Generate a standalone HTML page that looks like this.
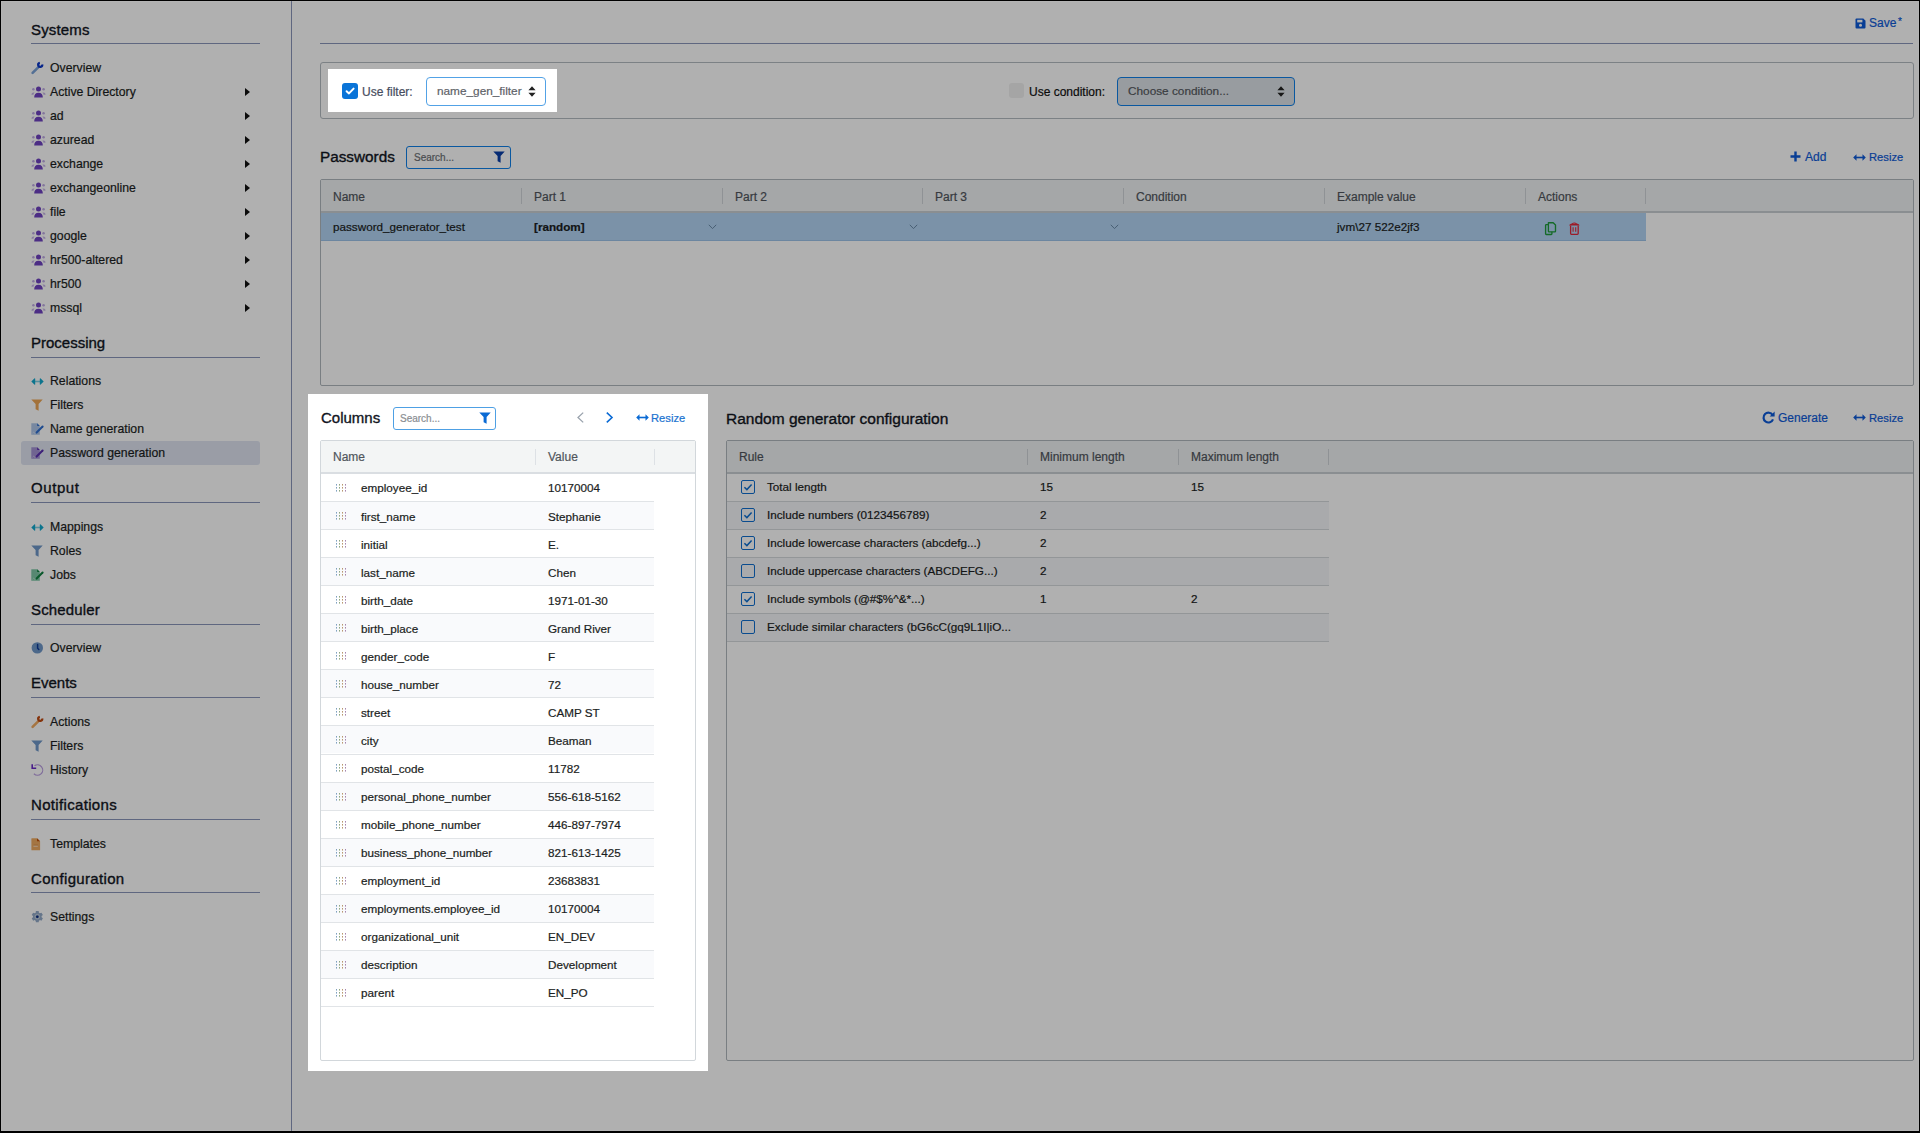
<!DOCTYPE html>
<html><head><meta charset="utf-8"><style>
html,body{margin:0;padding:0;width:1920px;height:1133px;overflow:hidden;background:#fff}
body{position:relative;font-family:"Liberation Sans",sans-serif;color:#1b1e22}
.t{-webkit-text-stroke:0.2px currentColor}
.a{position:absolute}
.t{position:absolute;white-space:nowrap;line-height:1}
.h{color:#111522;-webkit-text-stroke:0.35px #111522}
svg{overflow:visible}
</style></head><body>
<div class="a" style="left:0;top:0;width:1920px;height:1133px;background:#fff"></div>
<div class="a" style="left:291px;top:0px;width:1px;height:1133px;background:#8a95ba"></div>
<div class="t h" style="left:31px;top:22px;font-size:15px;letter-spacing:0.15px">Systems</div>
<div class="a" style="left:31px;top:43px;width:229px;height:1px;background:#8a95ba"></div>
<div class="t h" style="left:31px;top:335px;font-size:15px;letter-spacing:0px">Processing</div>
<div class="a" style="left:31px;top:357px;width:229px;height:1px;background:#8a95ba"></div>
<div class="t h" style="left:31px;top:480px;font-size:15px;letter-spacing:0.58px">Output</div>
<div class="a" style="left:31px;top:502px;width:229px;height:1px;background:#8a95ba"></div>
<div class="t h" style="left:31px;top:602px;font-size:15px;letter-spacing:0.14px">Scheduler</div>
<div class="a" style="left:31px;top:624px;width:229px;height:1px;background:#8a95ba"></div>
<div class="t h" style="left:31px;top:675px;font-size:15px;letter-spacing:0px">Events</div>
<div class="a" style="left:31px;top:697px;width:229px;height:1px;background:#8a95ba"></div>
<div class="t h" style="left:31px;top:797px;font-size:15px;letter-spacing:0.33px">Notifications</div>
<div class="a" style="left:31px;top:819px;width:229px;height:1px;background:#8a95ba"></div>
<div class="t h" style="left:31px;top:871px;font-size:15px;letter-spacing:0.33px">Configuration</div>
<div class="a" style="left:31px;top:892px;width:229px;height:1px;background:#8a95ba"></div>
<div class="a" style="left:21px;top:441px;width:239px;height:24px;background:#dfe4f1;border-radius:3px"></div>
<div class="t " style="left:50px;top:62px;font-size:12.25px;">Overview</div>
<svg class="a" style="left:31px;top:60px" width="14" height="14" viewBox="0 0 14 14"><path d="M1.6 12.9 L7.2 7.3" stroke="#7aa2d8" stroke-width="2.6" stroke-linecap="round"/><path d="M11.17 4.55 A2.0 2.0 0 1 1 8.85 2.93" stroke="#0a36c8" stroke-width="2.3" fill="none"/></svg>
<div class="t " style="left:50px;top:86px;font-size:12.25px;">Active Directory</div>
<svg class="a" style="left:31px;top:86px" width="15" height="12" viewBox="0 0 15 12"><circle cx="7.5" cy="3" r="2.5" fill="#6f42c1"/><path d="M3.2 11.5 Q3.2 6.8 7.5 6.8 Q11.8 6.8 11.8 11.5 Z" fill="#6f42c1"/><circle cx="2.4" cy="3.3" r="1.2" fill="#6f42c1" fill-opacity="0.45"/><circle cx="12.6" cy="3.3" r="1.2" fill="#6f42c1" fill-opacity="0.45"/><path d="M0.4 8.8 Q0.4 6.4 2.6 6.4 L3.6 6.6 Q2.6 7.6 2.5 8.8 Z" fill="#6f42c1" fill-opacity="0.4"/><path d="M14.6 8.8 Q14.6 6.4 12.4 6.4 L11.4 6.6 Q12.4 7.6 12.5 8.8 Z" fill="#6f42c1" fill-opacity="0.4"/></svg>
<svg class="a" style="left:245px;top:88px" width="5" height="8" viewBox="0 0 5 8"><path d="M0 0 L5 4 L0 8 Z" fill="#111"/></svg>
<div class="t " style="left:50px;top:110px;font-size:12.25px;">ad</div>
<svg class="a" style="left:31px;top:110px" width="15" height="12" viewBox="0 0 15 12"><circle cx="7.5" cy="3" r="2.5" fill="#6f42c1"/><path d="M3.2 11.5 Q3.2 6.8 7.5 6.8 Q11.8 6.8 11.8 11.5 Z" fill="#6f42c1"/><circle cx="2.4" cy="3.3" r="1.2" fill="#6f42c1" fill-opacity="0.45"/><circle cx="12.6" cy="3.3" r="1.2" fill="#6f42c1" fill-opacity="0.45"/><path d="M0.4 8.8 Q0.4 6.4 2.6 6.4 L3.6 6.6 Q2.6 7.6 2.5 8.8 Z" fill="#6f42c1" fill-opacity="0.4"/><path d="M14.6 8.8 Q14.6 6.4 12.4 6.4 L11.4 6.6 Q12.4 7.6 12.5 8.8 Z" fill="#6f42c1" fill-opacity="0.4"/></svg>
<svg class="a" style="left:245px;top:112px" width="5" height="8" viewBox="0 0 5 8"><path d="M0 0 L5 4 L0 8 Z" fill="#111"/></svg>
<div class="t " style="left:50px;top:134px;font-size:12.25px;">azuread</div>
<svg class="a" style="left:31px;top:134px" width="15" height="12" viewBox="0 0 15 12"><circle cx="7.5" cy="3" r="2.5" fill="#6f42c1"/><path d="M3.2 11.5 Q3.2 6.8 7.5 6.8 Q11.8 6.8 11.8 11.5 Z" fill="#6f42c1"/><circle cx="2.4" cy="3.3" r="1.2" fill="#6f42c1" fill-opacity="0.45"/><circle cx="12.6" cy="3.3" r="1.2" fill="#6f42c1" fill-opacity="0.45"/><path d="M0.4 8.8 Q0.4 6.4 2.6 6.4 L3.6 6.6 Q2.6 7.6 2.5 8.8 Z" fill="#6f42c1" fill-opacity="0.4"/><path d="M14.6 8.8 Q14.6 6.4 12.4 6.4 L11.4 6.6 Q12.4 7.6 12.5 8.8 Z" fill="#6f42c1" fill-opacity="0.4"/></svg>
<svg class="a" style="left:245px;top:136px" width="5" height="8" viewBox="0 0 5 8"><path d="M0 0 L5 4 L0 8 Z" fill="#111"/></svg>
<div class="t " style="left:50px;top:158px;font-size:12.25px;">exchange</div>
<svg class="a" style="left:31px;top:158px" width="15" height="12" viewBox="0 0 15 12"><circle cx="7.5" cy="3" r="2.5" fill="#6f42c1"/><path d="M3.2 11.5 Q3.2 6.8 7.5 6.8 Q11.8 6.8 11.8 11.5 Z" fill="#6f42c1"/><circle cx="2.4" cy="3.3" r="1.2" fill="#6f42c1" fill-opacity="0.45"/><circle cx="12.6" cy="3.3" r="1.2" fill="#6f42c1" fill-opacity="0.45"/><path d="M0.4 8.8 Q0.4 6.4 2.6 6.4 L3.6 6.6 Q2.6 7.6 2.5 8.8 Z" fill="#6f42c1" fill-opacity="0.4"/><path d="M14.6 8.8 Q14.6 6.4 12.4 6.4 L11.4 6.6 Q12.4 7.6 12.5 8.8 Z" fill="#6f42c1" fill-opacity="0.4"/></svg>
<svg class="a" style="left:245px;top:160px" width="5" height="8" viewBox="0 0 5 8"><path d="M0 0 L5 4 L0 8 Z" fill="#111"/></svg>
<div class="t " style="left:50px;top:182px;font-size:12.25px;">exchangeonline</div>
<svg class="a" style="left:31px;top:182px" width="15" height="12" viewBox="0 0 15 12"><circle cx="7.5" cy="3" r="2.5" fill="#6f42c1"/><path d="M3.2 11.5 Q3.2 6.8 7.5 6.8 Q11.8 6.8 11.8 11.5 Z" fill="#6f42c1"/><circle cx="2.4" cy="3.3" r="1.2" fill="#6f42c1" fill-opacity="0.45"/><circle cx="12.6" cy="3.3" r="1.2" fill="#6f42c1" fill-opacity="0.45"/><path d="M0.4 8.8 Q0.4 6.4 2.6 6.4 L3.6 6.6 Q2.6 7.6 2.5 8.8 Z" fill="#6f42c1" fill-opacity="0.4"/><path d="M14.6 8.8 Q14.6 6.4 12.4 6.4 L11.4 6.6 Q12.4 7.6 12.5 8.8 Z" fill="#6f42c1" fill-opacity="0.4"/></svg>
<svg class="a" style="left:245px;top:184px" width="5" height="8" viewBox="0 0 5 8"><path d="M0 0 L5 4 L0 8 Z" fill="#111"/></svg>
<div class="t " style="left:50px;top:206px;font-size:12.25px;">file</div>
<svg class="a" style="left:31px;top:206px" width="15" height="12" viewBox="0 0 15 12"><circle cx="7.5" cy="3" r="2.5" fill="#6f42c1"/><path d="M3.2 11.5 Q3.2 6.8 7.5 6.8 Q11.8 6.8 11.8 11.5 Z" fill="#6f42c1"/><circle cx="2.4" cy="3.3" r="1.2" fill="#6f42c1" fill-opacity="0.45"/><circle cx="12.6" cy="3.3" r="1.2" fill="#6f42c1" fill-opacity="0.45"/><path d="M0.4 8.8 Q0.4 6.4 2.6 6.4 L3.6 6.6 Q2.6 7.6 2.5 8.8 Z" fill="#6f42c1" fill-opacity="0.4"/><path d="M14.6 8.8 Q14.6 6.4 12.4 6.4 L11.4 6.6 Q12.4 7.6 12.5 8.8 Z" fill="#6f42c1" fill-opacity="0.4"/></svg>
<svg class="a" style="left:245px;top:208px" width="5" height="8" viewBox="0 0 5 8"><path d="M0 0 L5 4 L0 8 Z" fill="#111"/></svg>
<div class="t " style="left:50px;top:230px;font-size:12.25px;">google</div>
<svg class="a" style="left:31px;top:230px" width="15" height="12" viewBox="0 0 15 12"><circle cx="7.5" cy="3" r="2.5" fill="#6f42c1"/><path d="M3.2 11.5 Q3.2 6.8 7.5 6.8 Q11.8 6.8 11.8 11.5 Z" fill="#6f42c1"/><circle cx="2.4" cy="3.3" r="1.2" fill="#6f42c1" fill-opacity="0.45"/><circle cx="12.6" cy="3.3" r="1.2" fill="#6f42c1" fill-opacity="0.45"/><path d="M0.4 8.8 Q0.4 6.4 2.6 6.4 L3.6 6.6 Q2.6 7.6 2.5 8.8 Z" fill="#6f42c1" fill-opacity="0.4"/><path d="M14.6 8.8 Q14.6 6.4 12.4 6.4 L11.4 6.6 Q12.4 7.6 12.5 8.8 Z" fill="#6f42c1" fill-opacity="0.4"/></svg>
<svg class="a" style="left:245px;top:232px" width="5" height="8" viewBox="0 0 5 8"><path d="M0 0 L5 4 L0 8 Z" fill="#111"/></svg>
<div class="t " style="left:50px;top:254px;font-size:12.25px;">hr500-altered</div>
<svg class="a" style="left:31px;top:254px" width="15" height="12" viewBox="0 0 15 12"><circle cx="7.5" cy="3" r="2.5" fill="#6f42c1"/><path d="M3.2 11.5 Q3.2 6.8 7.5 6.8 Q11.8 6.8 11.8 11.5 Z" fill="#6f42c1"/><circle cx="2.4" cy="3.3" r="1.2" fill="#6f42c1" fill-opacity="0.45"/><circle cx="12.6" cy="3.3" r="1.2" fill="#6f42c1" fill-opacity="0.45"/><path d="M0.4 8.8 Q0.4 6.4 2.6 6.4 L3.6 6.6 Q2.6 7.6 2.5 8.8 Z" fill="#6f42c1" fill-opacity="0.4"/><path d="M14.6 8.8 Q14.6 6.4 12.4 6.4 L11.4 6.6 Q12.4 7.6 12.5 8.8 Z" fill="#6f42c1" fill-opacity="0.4"/></svg>
<svg class="a" style="left:245px;top:256px" width="5" height="8" viewBox="0 0 5 8"><path d="M0 0 L5 4 L0 8 Z" fill="#111"/></svg>
<div class="t " style="left:50px;top:278px;font-size:12.25px;">hr500</div>
<svg class="a" style="left:31px;top:278px" width="15" height="12" viewBox="0 0 15 12"><circle cx="7.5" cy="3" r="2.5" fill="#6f42c1"/><path d="M3.2 11.5 Q3.2 6.8 7.5 6.8 Q11.8 6.8 11.8 11.5 Z" fill="#6f42c1"/><circle cx="2.4" cy="3.3" r="1.2" fill="#6f42c1" fill-opacity="0.45"/><circle cx="12.6" cy="3.3" r="1.2" fill="#6f42c1" fill-opacity="0.45"/><path d="M0.4 8.8 Q0.4 6.4 2.6 6.4 L3.6 6.6 Q2.6 7.6 2.5 8.8 Z" fill="#6f42c1" fill-opacity="0.4"/><path d="M14.6 8.8 Q14.6 6.4 12.4 6.4 L11.4 6.6 Q12.4 7.6 12.5 8.8 Z" fill="#6f42c1" fill-opacity="0.4"/></svg>
<svg class="a" style="left:245px;top:280px" width="5" height="8" viewBox="0 0 5 8"><path d="M0 0 L5 4 L0 8 Z" fill="#111"/></svg>
<div class="t " style="left:50px;top:302px;font-size:12.25px;">mssql</div>
<svg class="a" style="left:31px;top:302px" width="15" height="12" viewBox="0 0 15 12"><circle cx="7.5" cy="3" r="2.5" fill="#6f42c1"/><path d="M3.2 11.5 Q3.2 6.8 7.5 6.8 Q11.8 6.8 11.8 11.5 Z" fill="#6f42c1"/><circle cx="2.4" cy="3.3" r="1.2" fill="#6f42c1" fill-opacity="0.45"/><circle cx="12.6" cy="3.3" r="1.2" fill="#6f42c1" fill-opacity="0.45"/><path d="M0.4 8.8 Q0.4 6.4 2.6 6.4 L3.6 6.6 Q2.6 7.6 2.5 8.8 Z" fill="#6f42c1" fill-opacity="0.4"/><path d="M14.6 8.8 Q14.6 6.4 12.4 6.4 L11.4 6.6 Q12.4 7.6 12.5 8.8 Z" fill="#6f42c1" fill-opacity="0.4"/></svg>
<svg class="a" style="left:245px;top:304px" width="5" height="8" viewBox="0 0 5 8"><path d="M0 0 L5 4 L0 8 Z" fill="#111"/></svg>
<div class="t " style="left:50px;top:375px;font-size:12.25px;">Relations</div>
<svg class="a" style="left:31px;top:378px" width="13" height="7" viewBox="0 0 13 7"><path d="M0.3 3.5 L3.6 0.2 Q4.2 0 4.2 0.8 V6.2 Q4.2 7 3.6 6.8 Z M12.7 3.5 L9.4 0.2 Q8.8 0 8.8 0.8 V6.2 Q8.8 7 9.4 6.8 Z" fill="#12a8cc"/><rect x="4" y="2.7" width="5" height="1.6" fill="#12a8cc" fill-opacity="0.55"/></svg>
<div class="t " style="left:50px;top:399px;font-size:12.25px;">Filters</div>
<svg class="a" style="left:31px;top:399px" width="12" height="12" viewBox="0 0 12 12"><path d="M0.3 0.4 H11.7 L7.6 5.0 V11.8 L4.6 10.2 V5.0 Z" fill="#eda655" fill-opacity="1.0"/></svg>
<div class="t " style="left:50px;top:423px;font-size:12.25px;">Name generation</div>
<svg class="a" style="left:31px;top:423px" width="13" height="12" viewBox="0 0 13 12"><path d="M0.3 0.3 H6.2 L8.8 2.9 V11.7 H0.3 Z" fill="#7aa0d8" fill-opacity="0.6"/><path d="M6.2 0.3 L8.8 2.9 H6.2 Z" fill="#2f6fd0"/><path d="M1.6 10.2 Q2.6 8.4 3.4 10 Q4 9.2 4.6 10" stroke="#fff" stroke-opacity="0.6" stroke-width="0.8" fill="none"/><path d="M5.6 9.6 L11.6 3.6" stroke="#2f6fd0" stroke-width="2.1" stroke-linecap="round"/></svg>
<div class="t " style="left:50px;top:447px;font-size:12.25px;">Password generation</div>
<svg class="a" style="left:31px;top:447px" width="13" height="12" viewBox="0 0 13 12"><path d="M0.3 0.3 H6.2 L8.8 2.9 V11.7 H0.3 Z" fill="#7a5cc0" fill-opacity="0.6"/><path d="M6.2 0.3 L8.8 2.9 H6.2 Z" fill="#5a2fb0"/><path d="M1.6 10.2 Q2.6 8.4 3.4 10 Q4 9.2 4.6 10" stroke="#fff" stroke-opacity="0.6" stroke-width="0.8" fill="none"/><path d="M5.6 9.6 L11.6 3.6" stroke="#5a2fb0" stroke-width="2.1" stroke-linecap="round"/></svg>
<div class="t " style="left:50px;top:521px;font-size:12.25px;">Mappings</div>
<svg class="a" style="left:31px;top:524px" width="13" height="7" viewBox="0 0 13 7"><path d="M0.3 3.5 L3.6 0.2 Q4.2 0 4.2 0.8 V6.2 Q4.2 7 3.6 6.8 Z M12.7 3.5 L9.4 0.2 Q8.8 0 8.8 0.8 V6.2 Q8.8 7 9.4 6.8 Z" fill="#12a8cc"/><rect x="4" y="2.7" width="5" height="1.6" fill="#12a8cc" fill-opacity="0.55"/></svg>
<div class="t " style="left:50px;top:545px;font-size:12.25px;">Roles</div>
<svg class="a" style="left:31px;top:545px" width="12" height="12" viewBox="0 0 12 12"><path d="M0.3 0.4 H11.7 L7.6 5.0 V11.8 L4.6 10.2 V5.0 Z" fill="#6f97c8" fill-opacity="1.0"/></svg>
<div class="t " style="left:50px;top:569px;font-size:12.25px;">Jobs</div>
<svg class="a" style="left:31px;top:569px" width="13" height="12" viewBox="0 0 13 12"><path d="M0.3 0.3 H6.2 L8.8 2.9 V11.7 H0.3 Z" fill="#28a06a" fill-opacity="0.6"/><path d="M6.2 0.3 L8.8 2.9 H6.2 Z" fill="#108040"/><path d="M1.6 10.2 Q2.6 8.4 3.4 10 Q4 9.2 4.6 10" stroke="#fff" stroke-opacity="0.6" stroke-width="0.8" fill="none"/><path d="M5.6 9.6 L11.6 3.6" stroke="#108040" stroke-width="2.1" stroke-linecap="round"/></svg>
<div class="t " style="left:50px;top:642px;font-size:12.25px;">Overview</div>
<svg class="a" style="left:31px;top:641px" width="13" height="13" viewBox="0 0 13 13"><circle cx="6.3" cy="6.9" r="5.7" fill="#6f97c8"/><path d="M6.6 3.6 V7.3 L7.8 8.5" stroke="#0c3a98" stroke-width="1.5" fill="none" stroke-linecap="round"/></svg>
<div class="t " style="left:50px;top:716px;font-size:12.25px;">Actions</div>
<svg class="a" style="left:31px;top:714px" width="14" height="14" viewBox="0 0 14 14"><path d="M1.6 12.9 L7.2 7.3" stroke="#f0aa60" stroke-width="2.6" stroke-linecap="round"/><path d="M11.17 4.55 A2.0 2.0 0 1 1 8.85 2.93" stroke="#c04a10" stroke-width="2.3" fill="none"/></svg>
<div class="t " style="left:50px;top:740px;font-size:12.25px;">Filters</div>
<svg class="a" style="left:31px;top:740px" width="12" height="12" viewBox="0 0 12 12"><path d="M0.3 0.4 H11.7 L7.6 5.0 V11.8 L4.6 10.2 V5.0 Z" fill="#6f97c8" fill-opacity="1.0"/></svg>
<div class="t " style="left:50px;top:764px;font-size:12.25px;">History</div>
<svg class="a" style="left:31px;top:763px" width="13" height="13" viewBox="0 0 13 13"><path d="M3.52 2.74 A5.2 5.2 0 1 1 2.89 10.74" stroke="#b89ce0" stroke-width="1.2" fill="none"/><path d="M1.2 1.2 V5.3 H5.2" stroke="#6a2ac8" stroke-width="1.6" fill="none"/></svg>
<div class="t " style="left:50px;top:838px;font-size:12.25px;">Templates</div>
<svg class="a" style="left:31px;top:838px" width="10" height="13" viewBox="0 0 10 13"><path d="M0.4 0.8 Q0.4 0.3 0.9 0.3 H6 L9.1 3.3 V11.8 Q9.1 12.3 8.6 12.3 H0.9 Q0.4 12.3 0.4 11.8 Z" fill="#eeaa60"/><path d="M6 0.3 L9.1 3.3 H6.2 Q6 3.3 6 3.1 Z" fill="#c0500a"/><rect x="2.6" y="6.6" width="4.4" height="0.9" fill="#d8904a"/><rect x="2.4" y="7.6" width="4.4" height="1.4" fill="#fff" fill-opacity="0.45"/></svg>
<div class="t " style="left:50px;top:911px;font-size:12.25px;">Settings</div>
<svg class="a" style="left:31px;top:910px" width="13" height="13" viewBox="0 0 13 13"><g transform="translate(0.3,0.7)"><path d="M4.39 2.01 L4.60 0.37 L7.40 0.37 L7.61 2.01 L8.15 2.28 L8.65 2.61 L10.17 1.97 L11.58 4.40 L10.26 5.40 L10.30 6.00 L10.26 6.60 L11.58 7.60 L10.17 10.03 L8.65 9.39 L8.15 9.72 L7.61 9.99 L7.40 11.63 L4.60 11.63 L4.39 9.99 L3.85 9.72 L3.35 9.39 L1.83 10.03 L0.42 7.60 L1.74 6.60 L1.70 6.00 L1.74 5.40 L0.42 4.40 L1.83 1.97 L3.35 2.61 L3.85 2.28 Z" fill="#93aac8"/><circle cx="6" cy="6" r="2.3" fill="none" stroke="#c8d2de" stroke-width="0.9"/><circle cx="6" cy="6" r="1.3" fill="#0a2c80"/></g></svg>
<div class="a" style="left:320px;top:43px;width:1593px;height:1px;background:#8a95ba"></div>
<svg class="a" style="left:1855px;top:18px" width="11" height="11" viewBox="0 0 11 11"><path d="M0.5 1.5 Q0.5 0.5 1.5 0.5 H8.3 L10.5 2.7 V9.5 Q10.5 10.5 9.5 10.5 H1.5 Q0.5 10.5 0.5 9.5 Z" fill="#0e5ad8"/><rect x="2.2" y="1.8" width="5.2" height="2.6" fill="#fff"/><circle cx="5.5" cy="7.3" r="1.5" fill="#fff"/></svg>
<div class="t " style="left:1869px;top:17px;font-size:12px;color:#0e5ad8">Save</div>
<div class="t " style="left:1898px;top:17px;font-size:10px;color:#0e5ad8">*</div>
<div class="a" style="left:320px;top:62px;width:1594px;height:57px;border:1px solid #b4bbc1;border-radius:3px;box-sizing:border-box"></div>
<div class="a" style="left:342px;top:83px;width:16px;height:16px;background:#0a74d8;border-radius:3px"></div>
<svg class="a" style="left:342px;top:83px" width="16" height="16" viewBox="0 0 16 16"><path d="M4.6 8.2 L7 10.4 L11.6 5.6" stroke="#fff" stroke-width="2" fill="none" stroke-linecap="round" stroke-linejoin="round"/></svg>
<div class="t " style="left:362px;top:86px;font-size:12px;color:#474d60">Use filter:</div>
<div class="a" style="left:426px;top:77px;width:120px;height:29px;border:1px solid #52a2e6;border-radius:4px;box-sizing:border-box"></div>
<div class="t " style="left:437px;top:86px;font-size:11.8px;color:#5e6268">name_gen_filter</div>
<svg class="a" style="left:528px;top:86px" width="8" height="11" viewBox="0 0 8 11"><path d="M4 0.3 L7.6 4.3 H0.4 Z M4 10.7 L7.6 6.7 H0.4 Z" fill="#222"/></svg>
<div class="a" style="left:1009px;top:83px;width:15px;height:15px;background:#f0f0f0;border-radius:3px"></div>
<div class="t " style="left:1029px;top:86px;font-size:12px;color:#111">Use condition:</div>
<div class="a" style="left:1117px;top:77px;width:178px;height:29px;border:1.5px solid #0f80e8;border-radius:4px;box-sizing:border-box;background:#dde3e8"></div>
<div class="t " style="left:1128px;top:86px;font-size:11.8px;color:#55595e">Choose condition...</div>
<svg class="a" style="left:1277px;top:86px" width="8" height="11" viewBox="0 0 8 11"><path d="M4 0.3 L7.6 4.3 H0.4 Z M4 10.7 L7.6 6.7 H0.4 Z" fill="#222"/></svg>
<div class="t h" style="left:320px;top:149px;font-size:15.3px;">Passwords</div>
<div class="a" style="left:406px;top:146px;width:105px;height:23px;border:1.5px solid #0f80e8;border-radius:3px;box-sizing:border-box"></div>
<div class="t " style="left:414px;top:153px;font-size:10px;color:#6c7075">Search...</div>
<svg class="a" style="left:493px;top:151px" width="12" height="12" viewBox="0 0 12 12"><path d="M0.3 0.4 H11.7 L7.6 5.0 V11.8 L4.6 10.2 V5.0 Z" fill="#0a3fa8" fill-opacity="1.0"/></svg>
<svg class="a" style="left:1790px;top:151px" width="11" height="11" viewBox="0 0 11 11"><path d="M5.5 0.5 V10.5 M0.5 5.5 H10.5" stroke="#0e5ad8" stroke-width="2.4"/></svg>
<div class="t " style="left:1805px;top:151px;font-size:12px;color:#0e5ad8">Add</div>
<svg class="a" style="left:1853px;top:154px" width="13" height="7" viewBox="0 0 13 7"><path d="M0.2 3.5 L3.5 0.3 V6.7 Z M12.8 3.5 L9.5 0.3 V6.7 Z" fill="#0e5ad8"/><rect x="3" y="2.7" width="7" height="1.6" fill="#0e5ad8"/></svg>
<div class="t " style="left:1869px;top:152px;font-size:11.2px;color:#0e5ad8">Resize</div>
<div class="a" style="left:320px;top:179px;width:1594px;height:207px;border:1px solid #b0b7bd;box-sizing:border-box;border-radius:2px"></div>
<div class="a" style="left:321px;top:180px;width:1592px;height:31px;background:#eff2f3"></div>
<div class="a" style="left:321px;top:211px;width:1592px;height:2px;background:#c9ced3"></div>
<div class="t " style="left:333px;top:191px;font-size:12px;color:#50555c">Name</div>
<div class="t " style="left:534px;top:191px;font-size:12px;color:#50555c">Part 1</div>
<div class="t " style="left:735px;top:191px;font-size:12px;color:#50555c">Part 2</div>
<div class="t " style="left:935px;top:191px;font-size:12px;color:#50555c">Part 3</div>
<div class="t " style="left:1136px;top:191px;font-size:12px;color:#50555c">Condition</div>
<div class="t " style="left:1337px;top:191px;font-size:12px;color:#50555c">Example value</div>
<div class="t " style="left:1538px;top:191px;font-size:12px;color:#50555c">Actions</div>
<div class="a" style="left:521px;top:188px;width:1px;height:16px;background:#cfd4d8"></div>
<div class="a" style="left:722px;top:188px;width:1px;height:16px;background:#cfd4d8"></div>
<div class="a" style="left:922px;top:188px;width:1px;height:16px;background:#cfd4d8"></div>
<div class="a" style="left:1123px;top:188px;width:1px;height:16px;background:#cfd4d8"></div>
<div class="a" style="left:1324px;top:188px;width:1px;height:16px;background:#cfd4d8"></div>
<div class="a" style="left:1525px;top:188px;width:1px;height:16px;background:#cfd4d8"></div>
<div class="a" style="left:1645px;top:188px;width:1px;height:16px;background:#cfd4d8"></div>
<div class="a" style="left:321px;top:213px;width:1325px;height:28px;background:#b2d4f4"></div>
<div class="a" style="left:321px;top:240px;width:1325px;height:1px;background:#9dc2e8"></div>
<div class="t " style="left:333px;top:221px;font-size:11.7px;">password_generator_test</div>
<div class="t " style="left:534px;top:221px;font-size:11.7px;font-weight:bold">[random]</div>
<svg class="a" style="left:708px;top:224px" width="9" height="6" viewBox="0 0 9 6"><path d="M0.8 0.8 L4.5 4.6 L8.2 0.8" stroke="#6a8aa8" stroke-width="1" fill="none"/></svg>
<svg class="a" style="left:909px;top:224px" width="9" height="6" viewBox="0 0 9 6"><path d="M0.8 0.8 L4.5 4.6 L8.2 0.8" stroke="#6a8aa8" stroke-width="1" fill="none"/></svg>
<svg class="a" style="left:1110px;top:224px" width="9" height="6" viewBox="0 0 9 6"><path d="M0.8 0.8 L4.5 4.6 L8.2 0.8" stroke="#6a8aa8" stroke-width="1" fill="none"/></svg>
<div class="t " style="left:1337px;top:221px;font-size:11.7px;">jvm\27 522e2jf3</div>
<svg class="a" style="left:1545px;top:222px" width="12" height="13" viewBox="0 0 12 13"><path d="M3.4 0.7 H8.2 L10.5 3 V9.2 Q10.5 9.8 9.9 9.8 H4 Q3.4 9.8 3.4 9.2 Z" fill="none" stroke="#1f9a3a" stroke-width="1.35" stroke-linejoin="round"/><path d="M3.4 2.6 H1.3 Q0.6 2.6 0.6 3.3 V11.8 Q0.6 12.5 1.3 12.5 H6.2 Q6.9 12.5 6.9 11.8 V9.8" fill="none" stroke="#1f9a3a" stroke-width="1.35"/></svg>
<svg class="a" style="left:1569px;top:222px" width="11" height="13" viewBox="0 0 11 13"><path d="M0.1 3.6 Q0.4 1.9 2.8 1.6 Q5.3 -0.4 7.9 1.6 Q10.3 1.9 10.6 3.6 Z" fill="#e0283a"/><rect x="4.2" y="1" width="2.2" height="0.6" fill="#f08090"/><path d="M1.6 3.4 V11.5 Q1.6 12.3 2.4 12.3 H8.4 Q9.2 12.3 9.2 11.5 V3.4" fill="none" stroke="#e0283a" stroke-width="1.3"/><path d="M4.1 5.2 V9.8 M6.7 5.2 V9.8" stroke="#e0283a" stroke-width="1.1"/></svg>
<div class="t h" style="left:321px;top:410px;font-size:15px;">Columns</div>
<div class="a" style="left:393px;top:407px;width:103px;height:23px;border:1px solid #4ea0e4;border-radius:3px;box-sizing:border-box"></div>
<div class="t " style="left:400px;top:414px;font-size:10px;color:#8a8e93">Search...</div>
<svg class="a" style="left:479px;top:412px" width="12" height="12" viewBox="0 0 12 12"><path d="M0.3 0.4 H11.7 L7.6 5.0 V11.8 L4.6 10.2 V5.0 Z" fill="#0a6ad4" fill-opacity="1.0"/></svg>
<svg class="a" style="left:577px;top:412px" width="7" height="11" viewBox="0 0 7 11"><path d="M6.2 0.6 L1 5.5 L6.2 10.4" stroke="#9aa3ad" stroke-width="1.3" fill="none"/></svg>
<svg class="a" style="left:606px;top:412px" width="7" height="11" viewBox="0 0 7 11"><path d="M0.8 0.6 L6 5.5 L0.8 10.4" stroke="#0a6ad4" stroke-width="1.6" fill="none"/></svg>
<svg class="a" style="left:636px;top:414px" width="13" height="7" viewBox="0 0 13 7"><path d="M0.2 3.5 L3.5 0.3 V6.7 Z M12.8 3.5 L9.5 0.3 V6.7 Z" fill="#0a6ad4"/><rect x="3" y="2.7" width="7" height="1.6" fill="#0a6ad4"/></svg>
<div class="t " style="left:651px;top:413px;font-size:11.2px;color:#1a72d0">Resize</div>
<div class="a" style="left:320px;top:440px;width:376px;height:621px;border:1px solid #d2d7db;box-sizing:border-box;border-radius:2px"></div>
<div class="a" style="left:321px;top:441px;width:374px;height:31px;background:#f3f5f5"></div>
<div class="a" style="left:321px;top:472px;width:374px;height:2px;background:#dadee2"></div>
<div class="t " style="left:333px;top:451px;font-size:12px;color:#50555c">Name</div>
<div class="t " style="left:548px;top:451px;font-size:12px;color:#50555c">Value</div>
<div class="a" style="left:535px;top:449px;width:1px;height:16px;background:#dde1e5"></div>
<div class="a" style="left:654px;top:449px;width:1px;height:16px;background:#dde1e5"></div>
<div class="a" style="left:321px;top:501.05px;width:333px;height:1px;background:#e1e4e7"></div>
<svg class="a" style="left:336px;top:484px" width="10" height="8" viewBox="0 0 10 8"><rect x="0" y="0" width="1" height="1.6" fill="#7fa0c0"/><rect x="3" y="0" width="1" height="1.6" fill="#90a880"/><rect x="6" y="0" width="1" height="1.6" fill="#b89870"/><rect x="9" y="0" width="1" height="1.6" fill="#a888b0"/><rect x="0" y="3" width="1" height="1.6" fill="#7fa0c0"/><rect x="3" y="3" width="1" height="1.6" fill="#90a880"/><rect x="6" y="3" width="1" height="1.6" fill="#b89870"/><rect x="9" y="3" width="1" height="1.6" fill="#a888b0"/><rect x="0" y="6" width="1" height="1.6" fill="#7fa0c0"/><rect x="3" y="6" width="1" height="1.6" fill="#90a880"/><rect x="6" y="6" width="1" height="1.6" fill="#b89870"/><rect x="9" y="6" width="1" height="1.6" fill="#a888b0"/></svg>
<div class="t " style="left:361px;top:482px;font-size:11.7px;">employee_id</div>
<div class="t " style="left:548px;top:482px;font-size:11.7px;">10170004</div>
<div class="a" style="left:321px;top:502.05px;width:333px;height:27px;background:#f9fafc"></div>
<div class="a" style="left:321px;top:529.1px;width:333px;height:1px;background:#e1e4e7"></div>
<svg class="a" style="left:336px;top:512px" width="10" height="8" viewBox="0 0 10 8"><rect x="0" y="0" width="1" height="1.6" fill="#7fa0c0"/><rect x="3" y="0" width="1" height="1.6" fill="#90a880"/><rect x="6" y="0" width="1" height="1.6" fill="#b89870"/><rect x="9" y="0" width="1" height="1.6" fill="#a888b0"/><rect x="0" y="3" width="1" height="1.6" fill="#7fa0c0"/><rect x="3" y="3" width="1" height="1.6" fill="#90a880"/><rect x="6" y="3" width="1" height="1.6" fill="#b89870"/><rect x="9" y="3" width="1" height="1.6" fill="#a888b0"/><rect x="0" y="6" width="1" height="1.6" fill="#7fa0c0"/><rect x="3" y="6" width="1" height="1.6" fill="#90a880"/><rect x="6" y="6" width="1" height="1.6" fill="#b89870"/><rect x="9" y="6" width="1" height="1.6" fill="#a888b0"/></svg>
<div class="t " style="left:361px;top:511px;font-size:11.7px;">first_name</div>
<div class="t " style="left:548px;top:511px;font-size:11.7px;">Stephanie</div>
<div class="a" style="left:321px;top:557.15px;width:333px;height:1px;background:#e1e4e7"></div>
<svg class="a" style="left:336px;top:540px" width="10" height="8" viewBox="0 0 10 8"><rect x="0" y="0" width="1" height="1.6" fill="#7fa0c0"/><rect x="3" y="0" width="1" height="1.6" fill="#90a880"/><rect x="6" y="0" width="1" height="1.6" fill="#b89870"/><rect x="9" y="0" width="1" height="1.6" fill="#a888b0"/><rect x="0" y="3" width="1" height="1.6" fill="#7fa0c0"/><rect x="3" y="3" width="1" height="1.6" fill="#90a880"/><rect x="6" y="3" width="1" height="1.6" fill="#b89870"/><rect x="9" y="3" width="1" height="1.6" fill="#a888b0"/><rect x="0" y="6" width="1" height="1.6" fill="#7fa0c0"/><rect x="3" y="6" width="1" height="1.6" fill="#90a880"/><rect x="6" y="6" width="1" height="1.6" fill="#b89870"/><rect x="9" y="6" width="1" height="1.6" fill="#a888b0"/></svg>
<div class="t " style="left:361px;top:539px;font-size:11.7px;">initial</div>
<div class="t " style="left:548px;top:539px;font-size:11.7px;">E.</div>
<div class="a" style="left:321px;top:558.15px;width:333px;height:27px;background:#f9fafc"></div>
<div class="a" style="left:321px;top:585.1999999999999px;width:333px;height:1px;background:#e1e4e7"></div>
<svg class="a" style="left:336px;top:568px" width="10" height="8" viewBox="0 0 10 8"><rect x="0" y="0" width="1" height="1.6" fill="#7fa0c0"/><rect x="3" y="0" width="1" height="1.6" fill="#90a880"/><rect x="6" y="0" width="1" height="1.6" fill="#b89870"/><rect x="9" y="0" width="1" height="1.6" fill="#a888b0"/><rect x="0" y="3" width="1" height="1.6" fill="#7fa0c0"/><rect x="3" y="3" width="1" height="1.6" fill="#90a880"/><rect x="6" y="3" width="1" height="1.6" fill="#b89870"/><rect x="9" y="3" width="1" height="1.6" fill="#a888b0"/><rect x="0" y="6" width="1" height="1.6" fill="#7fa0c0"/><rect x="3" y="6" width="1" height="1.6" fill="#90a880"/><rect x="6" y="6" width="1" height="1.6" fill="#b89870"/><rect x="9" y="6" width="1" height="1.6" fill="#a888b0"/></svg>
<div class="t " style="left:361px;top:567px;font-size:11.7px;">last_name</div>
<div class="t " style="left:548px;top:567px;font-size:11.7px;">Chen</div>
<div class="a" style="left:321px;top:613.25px;width:333px;height:1px;background:#e1e4e7"></div>
<svg class="a" style="left:336px;top:596px" width="10" height="8" viewBox="0 0 10 8"><rect x="0" y="0" width="1" height="1.6" fill="#7fa0c0"/><rect x="3" y="0" width="1" height="1.6" fill="#90a880"/><rect x="6" y="0" width="1" height="1.6" fill="#b89870"/><rect x="9" y="0" width="1" height="1.6" fill="#a888b0"/><rect x="0" y="3" width="1" height="1.6" fill="#7fa0c0"/><rect x="3" y="3" width="1" height="1.6" fill="#90a880"/><rect x="6" y="3" width="1" height="1.6" fill="#b89870"/><rect x="9" y="3" width="1" height="1.6" fill="#a888b0"/><rect x="0" y="6" width="1" height="1.6" fill="#7fa0c0"/><rect x="3" y="6" width="1" height="1.6" fill="#90a880"/><rect x="6" y="6" width="1" height="1.6" fill="#b89870"/><rect x="9" y="6" width="1" height="1.6" fill="#a888b0"/></svg>
<div class="t " style="left:361px;top:595px;font-size:11.7px;">birth_date</div>
<div class="t " style="left:548px;top:595px;font-size:11.7px;">1971-01-30</div>
<div class="a" style="left:321px;top:614.25px;width:333px;height:27px;background:#f9fafc"></div>
<div class="a" style="left:321px;top:641.3px;width:333px;height:1px;background:#e1e4e7"></div>
<svg class="a" style="left:336px;top:624px" width="10" height="8" viewBox="0 0 10 8"><rect x="0" y="0" width="1" height="1.6" fill="#7fa0c0"/><rect x="3" y="0" width="1" height="1.6" fill="#90a880"/><rect x="6" y="0" width="1" height="1.6" fill="#b89870"/><rect x="9" y="0" width="1" height="1.6" fill="#a888b0"/><rect x="0" y="3" width="1" height="1.6" fill="#7fa0c0"/><rect x="3" y="3" width="1" height="1.6" fill="#90a880"/><rect x="6" y="3" width="1" height="1.6" fill="#b89870"/><rect x="9" y="3" width="1" height="1.6" fill="#a888b0"/><rect x="0" y="6" width="1" height="1.6" fill="#7fa0c0"/><rect x="3" y="6" width="1" height="1.6" fill="#90a880"/><rect x="6" y="6" width="1" height="1.6" fill="#b89870"/><rect x="9" y="6" width="1" height="1.6" fill="#a888b0"/></svg>
<div class="t " style="left:361px;top:623px;font-size:11.7px;">birth_place</div>
<div class="t " style="left:548px;top:623px;font-size:11.7px;">Grand River</div>
<div class="a" style="left:321px;top:669.3499999999999px;width:333px;height:1px;background:#e1e4e7"></div>
<svg class="a" style="left:336px;top:652px" width="10" height="8" viewBox="0 0 10 8"><rect x="0" y="0" width="1" height="1.6" fill="#7fa0c0"/><rect x="3" y="0" width="1" height="1.6" fill="#90a880"/><rect x="6" y="0" width="1" height="1.6" fill="#b89870"/><rect x="9" y="0" width="1" height="1.6" fill="#a888b0"/><rect x="0" y="3" width="1" height="1.6" fill="#7fa0c0"/><rect x="3" y="3" width="1" height="1.6" fill="#90a880"/><rect x="6" y="3" width="1" height="1.6" fill="#b89870"/><rect x="9" y="3" width="1" height="1.6" fill="#a888b0"/><rect x="0" y="6" width="1" height="1.6" fill="#7fa0c0"/><rect x="3" y="6" width="1" height="1.6" fill="#90a880"/><rect x="6" y="6" width="1" height="1.6" fill="#b89870"/><rect x="9" y="6" width="1" height="1.6" fill="#a888b0"/></svg>
<div class="t " style="left:361px;top:651px;font-size:11.7px;">gender_code</div>
<div class="t " style="left:548px;top:651px;font-size:11.7px;">F</div>
<div class="a" style="left:321px;top:670.35px;width:333px;height:27px;background:#f9fafc"></div>
<div class="a" style="left:321px;top:697.4px;width:333px;height:1px;background:#e1e4e7"></div>
<svg class="a" style="left:336px;top:680px" width="10" height="8" viewBox="0 0 10 8"><rect x="0" y="0" width="1" height="1.6" fill="#7fa0c0"/><rect x="3" y="0" width="1" height="1.6" fill="#90a880"/><rect x="6" y="0" width="1" height="1.6" fill="#b89870"/><rect x="9" y="0" width="1" height="1.6" fill="#a888b0"/><rect x="0" y="3" width="1" height="1.6" fill="#7fa0c0"/><rect x="3" y="3" width="1" height="1.6" fill="#90a880"/><rect x="6" y="3" width="1" height="1.6" fill="#b89870"/><rect x="9" y="3" width="1" height="1.6" fill="#a888b0"/><rect x="0" y="6" width="1" height="1.6" fill="#7fa0c0"/><rect x="3" y="6" width="1" height="1.6" fill="#90a880"/><rect x="6" y="6" width="1" height="1.6" fill="#b89870"/><rect x="9" y="6" width="1" height="1.6" fill="#a888b0"/></svg>
<div class="t " style="left:361px;top:679px;font-size:11.7px;">house_number</div>
<div class="t " style="left:548px;top:679px;font-size:11.7px;">72</div>
<div class="a" style="left:321px;top:725.4499999999999px;width:333px;height:1px;background:#e1e4e7"></div>
<svg class="a" style="left:336px;top:708px" width="10" height="8" viewBox="0 0 10 8"><rect x="0" y="0" width="1" height="1.6" fill="#7fa0c0"/><rect x="3" y="0" width="1" height="1.6" fill="#90a880"/><rect x="6" y="0" width="1" height="1.6" fill="#b89870"/><rect x="9" y="0" width="1" height="1.6" fill="#a888b0"/><rect x="0" y="3" width="1" height="1.6" fill="#7fa0c0"/><rect x="3" y="3" width="1" height="1.6" fill="#90a880"/><rect x="6" y="3" width="1" height="1.6" fill="#b89870"/><rect x="9" y="3" width="1" height="1.6" fill="#a888b0"/><rect x="0" y="6" width="1" height="1.6" fill="#7fa0c0"/><rect x="3" y="6" width="1" height="1.6" fill="#90a880"/><rect x="6" y="6" width="1" height="1.6" fill="#b89870"/><rect x="9" y="6" width="1" height="1.6" fill="#a888b0"/></svg>
<div class="t " style="left:361px;top:707px;font-size:11.7px;">street</div>
<div class="t " style="left:548px;top:707px;font-size:11.7px;">CAMP ST</div>
<div class="a" style="left:321px;top:726.45px;width:333px;height:27px;background:#f9fafc"></div>
<div class="a" style="left:321px;top:753.5px;width:333px;height:1px;background:#e1e4e7"></div>
<svg class="a" style="left:336px;top:736px" width="10" height="8" viewBox="0 0 10 8"><rect x="0" y="0" width="1" height="1.6" fill="#7fa0c0"/><rect x="3" y="0" width="1" height="1.6" fill="#90a880"/><rect x="6" y="0" width="1" height="1.6" fill="#b89870"/><rect x="9" y="0" width="1" height="1.6" fill="#a888b0"/><rect x="0" y="3" width="1" height="1.6" fill="#7fa0c0"/><rect x="3" y="3" width="1" height="1.6" fill="#90a880"/><rect x="6" y="3" width="1" height="1.6" fill="#b89870"/><rect x="9" y="3" width="1" height="1.6" fill="#a888b0"/><rect x="0" y="6" width="1" height="1.6" fill="#7fa0c0"/><rect x="3" y="6" width="1" height="1.6" fill="#90a880"/><rect x="6" y="6" width="1" height="1.6" fill="#b89870"/><rect x="9" y="6" width="1" height="1.6" fill="#a888b0"/></svg>
<div class="t " style="left:361px;top:735px;font-size:11.7px;">city</div>
<div class="t " style="left:548px;top:735px;font-size:11.7px;">Beaman</div>
<div class="a" style="left:321px;top:781.55px;width:333px;height:1px;background:#e1e4e7"></div>
<svg class="a" style="left:336px;top:764px" width="10" height="8" viewBox="0 0 10 8"><rect x="0" y="0" width="1" height="1.6" fill="#7fa0c0"/><rect x="3" y="0" width="1" height="1.6" fill="#90a880"/><rect x="6" y="0" width="1" height="1.6" fill="#b89870"/><rect x="9" y="0" width="1" height="1.6" fill="#a888b0"/><rect x="0" y="3" width="1" height="1.6" fill="#7fa0c0"/><rect x="3" y="3" width="1" height="1.6" fill="#90a880"/><rect x="6" y="3" width="1" height="1.6" fill="#b89870"/><rect x="9" y="3" width="1" height="1.6" fill="#a888b0"/><rect x="0" y="6" width="1" height="1.6" fill="#7fa0c0"/><rect x="3" y="6" width="1" height="1.6" fill="#90a880"/><rect x="6" y="6" width="1" height="1.6" fill="#b89870"/><rect x="9" y="6" width="1" height="1.6" fill="#a888b0"/></svg>
<div class="t " style="left:361px;top:763px;font-size:11.7px;">postal_code</div>
<div class="t " style="left:548px;top:763px;font-size:11.7px;">11782</div>
<div class="a" style="left:321px;top:782.55px;width:333px;height:27px;background:#f9fafc"></div>
<div class="a" style="left:321px;top:809.5999999999999px;width:333px;height:1px;background:#e1e4e7"></div>
<svg class="a" style="left:336px;top:793px" width="10" height="8" viewBox="0 0 10 8"><rect x="0" y="0" width="1" height="1.6" fill="#7fa0c0"/><rect x="3" y="0" width="1" height="1.6" fill="#90a880"/><rect x="6" y="0" width="1" height="1.6" fill="#b89870"/><rect x="9" y="0" width="1" height="1.6" fill="#a888b0"/><rect x="0" y="3" width="1" height="1.6" fill="#7fa0c0"/><rect x="3" y="3" width="1" height="1.6" fill="#90a880"/><rect x="6" y="3" width="1" height="1.6" fill="#b89870"/><rect x="9" y="3" width="1" height="1.6" fill="#a888b0"/><rect x="0" y="6" width="1" height="1.6" fill="#7fa0c0"/><rect x="3" y="6" width="1" height="1.6" fill="#90a880"/><rect x="6" y="6" width="1" height="1.6" fill="#b89870"/><rect x="9" y="6" width="1" height="1.6" fill="#a888b0"/></svg>
<div class="t " style="left:361px;top:791px;font-size:11.7px;">personal_phone_number</div>
<div class="t " style="left:548px;top:791px;font-size:11.7px;">556-618-5162</div>
<div class="a" style="left:321px;top:837.65px;width:333px;height:1px;background:#e1e4e7"></div>
<svg class="a" style="left:336px;top:821px" width="10" height="8" viewBox="0 0 10 8"><rect x="0" y="0" width="1" height="1.6" fill="#7fa0c0"/><rect x="3" y="0" width="1" height="1.6" fill="#90a880"/><rect x="6" y="0" width="1" height="1.6" fill="#b89870"/><rect x="9" y="0" width="1" height="1.6" fill="#a888b0"/><rect x="0" y="3" width="1" height="1.6" fill="#7fa0c0"/><rect x="3" y="3" width="1" height="1.6" fill="#90a880"/><rect x="6" y="3" width="1" height="1.6" fill="#b89870"/><rect x="9" y="3" width="1" height="1.6" fill="#a888b0"/><rect x="0" y="6" width="1" height="1.6" fill="#7fa0c0"/><rect x="3" y="6" width="1" height="1.6" fill="#90a880"/><rect x="6" y="6" width="1" height="1.6" fill="#b89870"/><rect x="9" y="6" width="1" height="1.6" fill="#a888b0"/></svg>
<div class="t " style="left:361px;top:819px;font-size:11.7px;">mobile_phone_number</div>
<div class="t " style="left:548px;top:819px;font-size:11.7px;">446-897-7974</div>
<div class="a" style="left:321px;top:838.6500000000001px;width:333px;height:27px;background:#f9fafc"></div>
<div class="a" style="left:321px;top:865.7px;width:333px;height:1px;background:#e1e4e7"></div>
<svg class="a" style="left:336px;top:849px" width="10" height="8" viewBox="0 0 10 8"><rect x="0" y="0" width="1" height="1.6" fill="#7fa0c0"/><rect x="3" y="0" width="1" height="1.6" fill="#90a880"/><rect x="6" y="0" width="1" height="1.6" fill="#b89870"/><rect x="9" y="0" width="1" height="1.6" fill="#a888b0"/><rect x="0" y="3" width="1" height="1.6" fill="#7fa0c0"/><rect x="3" y="3" width="1" height="1.6" fill="#90a880"/><rect x="6" y="3" width="1" height="1.6" fill="#b89870"/><rect x="9" y="3" width="1" height="1.6" fill="#a888b0"/><rect x="0" y="6" width="1" height="1.6" fill="#7fa0c0"/><rect x="3" y="6" width="1" height="1.6" fill="#90a880"/><rect x="6" y="6" width="1" height="1.6" fill="#b89870"/><rect x="9" y="6" width="1" height="1.6" fill="#a888b0"/></svg>
<div class="t " style="left:361px;top:847px;font-size:11.7px;">business_phone_number</div>
<div class="t " style="left:548px;top:847px;font-size:11.7px;">821-613-1425</div>
<div class="a" style="left:321px;top:893.75px;width:333px;height:1px;background:#e1e4e7"></div>
<svg class="a" style="left:336px;top:877px" width="10" height="8" viewBox="0 0 10 8"><rect x="0" y="0" width="1" height="1.6" fill="#7fa0c0"/><rect x="3" y="0" width="1" height="1.6" fill="#90a880"/><rect x="6" y="0" width="1" height="1.6" fill="#b89870"/><rect x="9" y="0" width="1" height="1.6" fill="#a888b0"/><rect x="0" y="3" width="1" height="1.6" fill="#7fa0c0"/><rect x="3" y="3" width="1" height="1.6" fill="#90a880"/><rect x="6" y="3" width="1" height="1.6" fill="#b89870"/><rect x="9" y="3" width="1" height="1.6" fill="#a888b0"/><rect x="0" y="6" width="1" height="1.6" fill="#7fa0c0"/><rect x="3" y="6" width="1" height="1.6" fill="#90a880"/><rect x="6" y="6" width="1" height="1.6" fill="#b89870"/><rect x="9" y="6" width="1" height="1.6" fill="#a888b0"/></svg>
<div class="t " style="left:361px;top:875px;font-size:11.7px;">employment_id</div>
<div class="t " style="left:548px;top:875px;font-size:11.7px;">23683831</div>
<div class="a" style="left:321px;top:894.75px;width:333px;height:27px;background:#f9fafc"></div>
<div class="a" style="left:321px;top:921.8px;width:333px;height:1px;background:#e1e4e7"></div>
<svg class="a" style="left:336px;top:905px" width="10" height="8" viewBox="0 0 10 8"><rect x="0" y="0" width="1" height="1.6" fill="#7fa0c0"/><rect x="3" y="0" width="1" height="1.6" fill="#90a880"/><rect x="6" y="0" width="1" height="1.6" fill="#b89870"/><rect x="9" y="0" width="1" height="1.6" fill="#a888b0"/><rect x="0" y="3" width="1" height="1.6" fill="#7fa0c0"/><rect x="3" y="3" width="1" height="1.6" fill="#90a880"/><rect x="6" y="3" width="1" height="1.6" fill="#b89870"/><rect x="9" y="3" width="1" height="1.6" fill="#a888b0"/><rect x="0" y="6" width="1" height="1.6" fill="#7fa0c0"/><rect x="3" y="6" width="1" height="1.6" fill="#90a880"/><rect x="6" y="6" width="1" height="1.6" fill="#b89870"/><rect x="9" y="6" width="1" height="1.6" fill="#a888b0"/></svg>
<div class="t " style="left:361px;top:903px;font-size:11.7px;">employments.employee_id</div>
<div class="t " style="left:548px;top:903px;font-size:11.7px;">10170004</div>
<div class="a" style="left:321px;top:949.8499999999999px;width:333px;height:1px;background:#e1e4e7"></div>
<svg class="a" style="left:336px;top:933px" width="10" height="8" viewBox="0 0 10 8"><rect x="0" y="0" width="1" height="1.6" fill="#7fa0c0"/><rect x="3" y="0" width="1" height="1.6" fill="#90a880"/><rect x="6" y="0" width="1" height="1.6" fill="#b89870"/><rect x="9" y="0" width="1" height="1.6" fill="#a888b0"/><rect x="0" y="3" width="1" height="1.6" fill="#7fa0c0"/><rect x="3" y="3" width="1" height="1.6" fill="#90a880"/><rect x="6" y="3" width="1" height="1.6" fill="#b89870"/><rect x="9" y="3" width="1" height="1.6" fill="#a888b0"/><rect x="0" y="6" width="1" height="1.6" fill="#7fa0c0"/><rect x="3" y="6" width="1" height="1.6" fill="#90a880"/><rect x="6" y="6" width="1" height="1.6" fill="#b89870"/><rect x="9" y="6" width="1" height="1.6" fill="#a888b0"/></svg>
<div class="t " style="left:361px;top:931px;font-size:11.7px;">organizational_unit</div>
<div class="t " style="left:548px;top:931px;font-size:11.7px;">EN_DEV</div>
<div class="a" style="left:321px;top:950.85px;width:333px;height:27px;background:#f9fafc"></div>
<div class="a" style="left:321px;top:977.9px;width:333px;height:1px;background:#e1e4e7"></div>
<svg class="a" style="left:336px;top:961px" width="10" height="8" viewBox="0 0 10 8"><rect x="0" y="0" width="1" height="1.6" fill="#7fa0c0"/><rect x="3" y="0" width="1" height="1.6" fill="#90a880"/><rect x="6" y="0" width="1" height="1.6" fill="#b89870"/><rect x="9" y="0" width="1" height="1.6" fill="#a888b0"/><rect x="0" y="3" width="1" height="1.6" fill="#7fa0c0"/><rect x="3" y="3" width="1" height="1.6" fill="#90a880"/><rect x="6" y="3" width="1" height="1.6" fill="#b89870"/><rect x="9" y="3" width="1" height="1.6" fill="#a888b0"/><rect x="0" y="6" width="1" height="1.6" fill="#7fa0c0"/><rect x="3" y="6" width="1" height="1.6" fill="#90a880"/><rect x="6" y="6" width="1" height="1.6" fill="#b89870"/><rect x="9" y="6" width="1" height="1.6" fill="#a888b0"/></svg>
<div class="t " style="left:361px;top:959px;font-size:11.7px;">description</div>
<div class="t " style="left:548px;top:959px;font-size:11.7px;">Development</div>
<div class="a" style="left:321px;top:1005.95px;width:333px;height:1px;background:#e1e4e7"></div>
<svg class="a" style="left:336px;top:989px" width="10" height="8" viewBox="0 0 10 8"><rect x="0" y="0" width="1" height="1.6" fill="#7fa0c0"/><rect x="3" y="0" width="1" height="1.6" fill="#90a880"/><rect x="6" y="0" width="1" height="1.6" fill="#b89870"/><rect x="9" y="0" width="1" height="1.6" fill="#a888b0"/><rect x="0" y="3" width="1" height="1.6" fill="#7fa0c0"/><rect x="3" y="3" width="1" height="1.6" fill="#90a880"/><rect x="6" y="3" width="1" height="1.6" fill="#b89870"/><rect x="9" y="3" width="1" height="1.6" fill="#a888b0"/><rect x="0" y="6" width="1" height="1.6" fill="#7fa0c0"/><rect x="3" y="6" width="1" height="1.6" fill="#90a880"/><rect x="6" y="6" width="1" height="1.6" fill="#b89870"/><rect x="9" y="6" width="1" height="1.6" fill="#a888b0"/></svg>
<div class="t " style="left:361px;top:987px;font-size:11.7px;">parent</div>
<div class="t " style="left:548px;top:987px;font-size:11.7px;">EN_PO</div>
<div class="t h" style="left:726px;top:411px;font-size:15.5px;">Random generator configuration</div>
<svg class="a" style="left:1762px;top:411px" width="13" height="13" viewBox="0 0 13 13"><path d="M10.6 4 A4.9 4.9 0 1 0 11 8.4" stroke="#0e5ad8" stroke-width="2.2" fill="none"/><path d="M12.6 0.6 V5.6 H7.6 Z" fill="#0e5ad8"/></svg>
<div class="t " style="left:1778px;top:412px;font-size:12px;color:#0e5ad8">Generate</div>
<svg class="a" style="left:1853px;top:414px" width="13" height="7" viewBox="0 0 13 7"><path d="M0.2 3.5 L3.5 0.3 V6.7 Z M12.8 3.5 L9.5 0.3 V6.7 Z" fill="#0e5ad8"/><rect x="3" y="2.7" width="7" height="1.6" fill="#0e5ad8"/></svg>
<div class="t " style="left:1869px;top:413px;font-size:11.2px;color:#0e5ad8">Resize</div>
<div class="a" style="left:726px;top:440px;width:1188px;height:621px;border:1px solid #b0b7bd;box-sizing:border-box;border-radius:2px"></div>
<div class="a" style="left:727px;top:441px;width:1186px;height:31px;background:#eff2f3"></div>
<div class="a" style="left:727px;top:472px;width:1186px;height:2px;background:#c9ced3"></div>
<div class="t " style="left:739px;top:451px;font-size:12px;color:#50555c">Rule</div>
<div class="t " style="left:1040px;top:451px;font-size:12px;color:#50555c">Minimum length</div>
<div class="t " style="left:1191px;top:451px;font-size:12px;color:#50555c">Maximum length</div>
<div class="a" style="left:1027px;top:449px;width:1px;height:16px;background:#cfd4d8"></div>
<div class="a" style="left:1178px;top:449px;width:1px;height:16px;background:#cfd4d8"></div>
<div class="a" style="left:1328px;top:449px;width:1px;height:16px;background:#cfd4d8"></div>
<div class="a" style="left:727px;top:501px;width:602px;height:1px;background:#d5d9dd"></div>
<div class="a" style="left:741px;top:480px;width:14px;height:14px;border:1.5px solid #0f6fd0;border-radius:2px;box-sizing:border-box"></div>
<svg class="a" style="left:741px;top:480px" width="14" height="14" viewBox="0 0 14 14"><path d="M3.4 7.2 L5.9 9.6 L10.6 4.6" stroke="#0f6fd0" stroke-width="1.5" fill="none"/></svg>
<div class="t " style="left:767px;top:481px;font-size:11.7px;">Total length</div>
<div class="t " style="left:1040px;top:481px;font-size:11.7px;">15</div>
<div class="t " style="left:1191px;top:481px;font-size:11.7px;">15</div>
<div class="a" style="left:727px;top:502px;width:602px;height:27px;background:#f5f6fa"></div>
<div class="a" style="left:727px;top:529px;width:602px;height:1px;background:#d5d9dd"></div>
<div class="a" style="left:741px;top:508px;width:14px;height:14px;border:1.5px solid #0f6fd0;border-radius:2px;box-sizing:border-box"></div>
<svg class="a" style="left:741px;top:508px" width="14" height="14" viewBox="0 0 14 14"><path d="M3.4 7.2 L5.9 9.6 L10.6 4.6" stroke="#0f6fd0" stroke-width="1.5" fill="none"/></svg>
<div class="t " style="left:767px;top:509px;font-size:11.7px;">Include numbers (0123456789)</div>
<div class="t " style="left:1040px;top:509px;font-size:11.7px;">2</div>
<div class="a" style="left:727px;top:557px;width:602px;height:1px;background:#d5d9dd"></div>
<div class="a" style="left:741px;top:536px;width:14px;height:14px;border:1.5px solid #0f6fd0;border-radius:2px;box-sizing:border-box"></div>
<svg class="a" style="left:741px;top:536px" width="14" height="14" viewBox="0 0 14 14"><path d="M3.4 7.2 L5.9 9.6 L10.6 4.6" stroke="#0f6fd0" stroke-width="1.5" fill="none"/></svg>
<div class="t " style="left:767px;top:537px;font-size:11.7px;">Include lowercase characters (abcdefg...)</div>
<div class="t " style="left:1040px;top:537px;font-size:11.7px;">2</div>
<div class="a" style="left:727px;top:558px;width:602px;height:27px;background:#f5f6fa"></div>
<div class="a" style="left:727px;top:585px;width:602px;height:1px;background:#d5d9dd"></div>
<div class="a" style="left:741px;top:564px;width:14px;height:14px;border:1.5px solid #0f6fd0;border-radius:2px;box-sizing:border-box"></div>
<div class="t " style="left:767px;top:565px;font-size:11.7px;">Include uppercase characters (ABCDEFG...)</div>
<div class="t " style="left:1040px;top:565px;font-size:11.7px;">2</div>
<div class="a" style="left:727px;top:613px;width:602px;height:1px;background:#d5d9dd"></div>
<div class="a" style="left:741px;top:592px;width:14px;height:14px;border:1.5px solid #0f6fd0;border-radius:2px;box-sizing:border-box"></div>
<svg class="a" style="left:741px;top:592px" width="14" height="14" viewBox="0 0 14 14"><path d="M3.4 7.2 L5.9 9.6 L10.6 4.6" stroke="#0f6fd0" stroke-width="1.5" fill="none"/></svg>
<div class="t " style="left:767px;top:593px;font-size:11.7px;">Include symbols (@#$%^&amp;*...)</div>
<div class="t " style="left:1040px;top:593px;font-size:11.7px;">1</div>
<div class="t " style="left:1191px;top:593px;font-size:11.7px;">2</div>
<div class="a" style="left:727px;top:614px;width:602px;height:27px;background:#f5f6fa"></div>
<div class="a" style="left:727px;top:641px;width:602px;height:1px;background:#d5d9dd"></div>
<div class="a" style="left:741px;top:620px;width:14px;height:14px;border:1.5px solid #0f6fd0;border-radius:2px;box-sizing:border-box"></div>
<div class="t " style="left:767px;top:621px;font-size:11.7px;">Exclude similar characters (bG6cC(gq9L1I|iO...</div>
<svg class="a" style="left:0;top:0" width="1920" height="1133"><path fill-rule="evenodd" fill="rgba(0,0,0,0.31)" d="M0 0 H1920 V1133 H0 Z M328 69 H557 V112 H328 Z M308 394 H708 V1071 H308 Z"/></svg>
<div class="a" style="left:0;top:0;width:1920px;height:1133px;box-sizing:border-box;border-style:solid;border-color:#000;border-width:1px 1px 2px 1px;box-shadow:inset 0 0 0 1px rgba(255,255,255,0.06)"></div>
</body></html>
